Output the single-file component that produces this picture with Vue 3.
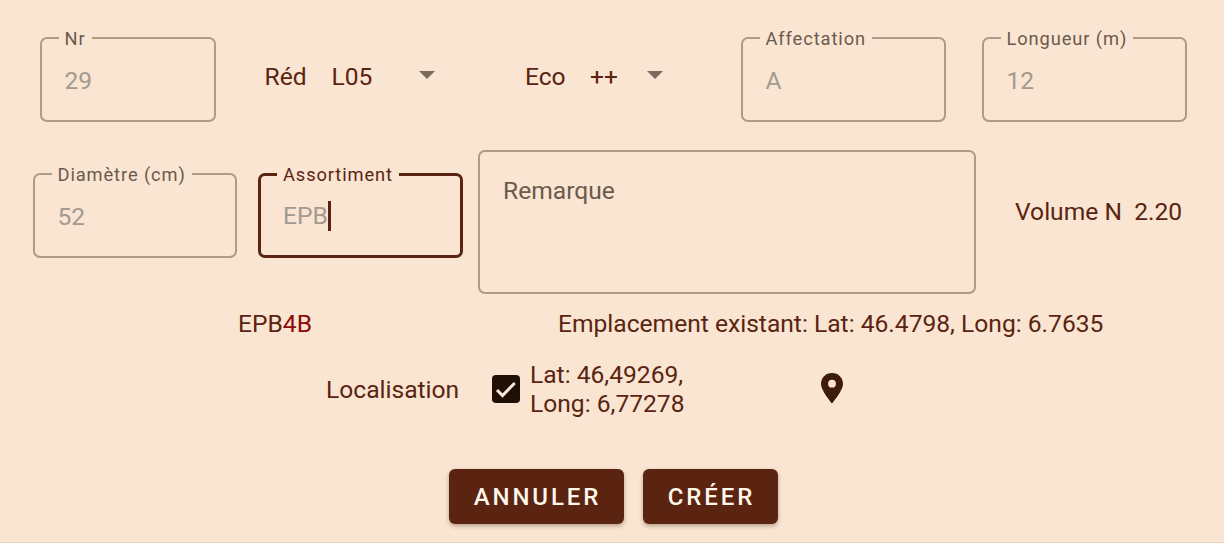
<script setup>
const topLeft = { label: 'Nr', value: '29' }
const topRight = [
  { label: 'Affectation', value: 'A', cls: 'f-aff' },
  { label: 'Longueur (m)', value: '12', cls: 'f-len' }
]
</script>

<template>
  <div class="form">
    <div class="row row-top">
      <div class="field f-nr">
        <span class="label">{{ topLeft.label }}</span>
        <input class="val" :value="topLeft.value" readonly />
      </div>
      <div class="select sel-red">
        <span class="sel-name">Réd</span>
        <span class="sel-value">L05</span>
        <span class="arrow"></span>
      </div>
      <div class="select sel-eco">
        <span class="sel-name">Eco</span>
        <span class="sel-value">++</span>
        <span class="arrow"></span>
      </div>
      <div v-for="f in topRight" :key="f.label" class="field" :class="f.cls">
        <span class="label">{{ f.label }}</span>
        <input class="val" :value="f.value" readonly />
      </div>
    </div>

    <div class="row row-mid">
      <div class="field f-dia">
        <span class="label">Diamètre (cm)</span>
        <input class="val" value="52" readonly />
      </div>
      <div class="field f-ass">
        <span class="label">Assortiment</span>
        <div class="val">EPB<span class="caret"></span></div>
      </div>
      <div class="remarque">Remarque</div>
      <div class="volume">Volume N&nbsp; 2.20</div>
    </div>

    <div class="row row-info">
      <span class="code">EPB<em>4B</em></span>
      <span class="existing">Emplacement existant: Lat: 46.4798, Long: 6.7635</span>
    </div>

    <div class="row row-loc">
      <span class="loc-name">Localisation</span>
      <span class="check">
        <svg viewBox="0 0 28 28" width="28" height="28">
          <path d="M5 15l5.5 5.5L22.8 8" fill="none" stroke="#fbe8d6" stroke-width="3" />
        </svg>
      </span>
      <span class="coords">Lat: 46,49269,<br />Long: 6,77278</span>
      <svg class="pin" viewBox="0 0 24 32" width="24" height="32">
        <path fill-rule="evenodd" d="M12 1C5.6 1 1 5.9 1 11.8 1 19 12 31.5 12 31.5S23 19 23 11.8C23 5.9 18.4 1 12 1zm0 14.6a3.9 3.9 0 1 1 0-7.8 3.9 3.9 0 0 1 0 7.8z" fill="#3d1c0b" />
      </svg>
    </div>

    <div class="row row-btn">
      <button class="btn">ANNULER</button>
      <button class="btn btn-create">CRÉER</button>
    </div>
  </div>
</template>

<style scoped>
.form {
  box-sizing: border-box;
  width: 1224px;
  height: 543px;
  background: #f9e5d2;
  border-bottom: 1px solid #e6d2bd;
  overflow: hidden;
  font-family: Roboto, "Liberation Sans", sans-serif;
  color: #5a2410;
  font-size: 24.6px;
}
.row {
  display: flex;
}
.row > * {
  flex-shrink: 0;
}
.row-top {
  padding: 37px 0 0 40px;
  height: 85px;
}
.field {
  position: relative;
  box-sizing: border-box;
  height: 85px;
  border: 2px solid #b09b87;
  border-radius: 7px;
}
.label {
  position: absolute;
  top: -11px;
  left: 16.5px;
  padding: 0 6px;
  background: #f9e5d2;
  font-size: 18.3px;
  line-height: 22px;
  letter-spacing: 0.9px;
  color: #6b5a4c;
}
.val {
  display: block;
  box-sizing: border-box;
  width: 100%;
  height: 82px;
  padding: 0 0 0 22.5px;
  border: none;
  outline: none;
  background: none;
  font: inherit;
  line-height: 81px;
  color: #a39a90;
}
.f-nr {
  width: 176px;
}
.f-aff {
  width: 205px;
}
.f-len {
  width: 205px;
  margin-left: 36px;
}
.select {
  display: flex;
  align-items: center;
  height: 78px;
}
.sel-red {
  margin-left: 48.5px;
  width: 260.5px;
}
.sel-eco {
  width: 216px;
}
.sel-name {
  width: 67px;
}
.sel-eco .sel-name {
  width: 65px;
}
.sel-value {
  width: 87.5px;
}
.sel-eco .sel-value {
  width: 57px;
}
.arrow {
  width: 0;
  height: 0;
  margin-top: -2px;
  border-left: 8px solid transparent;
  border-right: 8px solid transparent;
  border-top: 8px solid #7a6a5d;
}
.row-mid {
  margin-top: 28px;
  height: 143px;
  padding-left: 33px;
  align-items: flex-start;
}
.f-dia,
.f-ass {
  width: 204px;
  margin-top: 23px;
}
.f-ass {
  width: 205px;
  margin-left: 21px;
  border: 3px solid #5a2410;
}
.f-ass .label {
  top: -12px;
  left: 16px;
  color: #5a2410;
}
.f-ass .val {
  height: 79px;
  line-height: 79px;
  padding: 0 0 0 22px;
}
.caret {
  display: inline-block;
  width: 3px;
  height: 30px;
  background: #5a2410;
  vertical-align: middle;
  margin-top: -3px;
}
.remarque {
  box-sizing: border-box;
  width: 498px;
  height: 144px;
  margin-left: 15px;
  padding: 25px 23px;
  border: 2px solid #b09b87;
  border-radius: 7px;
  line-height: 28px;
  color: #6b5a4c;
}
.volume {
  margin: 47px 0 0 39px;
  line-height: 30px;
  white-space: nowrap;
}
.row-info {
  margin-top: 16px;
  height: 30px;
  line-height: 30px;
  padding-left: 238px;
}
.code em {
  font-style: normal;
  color: #8b0a0a;
}
.existing {
  margin-left: 246px;
}
.row-loc {
  margin-top: 22px;
  height: 56px;
  align-items: center;
  padding-left: 326px;
}
.loc-name {
  width: 166px;
}
.check {
  display: block;
  width: 28px;
  height: 28px;
  margin-top: -1px;
  background: #1f0f06;
  border-radius: 4px;
}
.check svg {
  display: block;
}
.coords {
  width: 290px;
  margin-left: 10px;
  line-height: 29px;
}
.pin {
  margin: -3px 0 0 0;
}
.row-btn {
  margin-top: 52px;
  padding-left: 449px;
  gap: 19px;
}
.btn {
  height: 55px;
  width: 175px;
  padding: 0 0 0 2px;
  border: none;
  border-radius: 6px;
  background: #5a2410;
  color: #fff6ec;
  font-family: inherit;
  font-size: 24px;
  font-weight: 500;
  letter-spacing: 2.9px;
  box-shadow: 0 2px 4px rgba(60, 30, 10, 0.35);
}
.btn-create {
  width: 135px;
}
</style>
